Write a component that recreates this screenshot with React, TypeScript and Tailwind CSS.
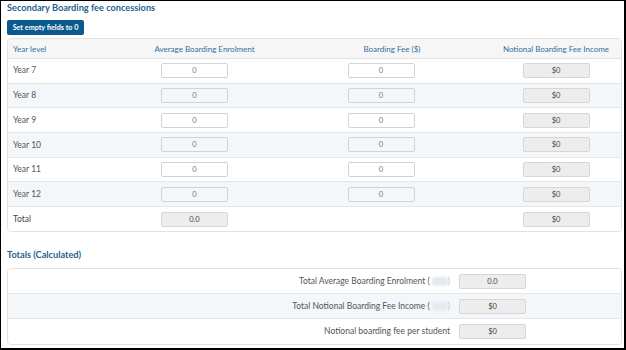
import React from "react";

const years = ["Year 7", "Year 8", "Year 9", "Year 10", "Year 11", "Year 12"];

function Box({ value, ro, shaded }: { value: string; ro?: boolean; shaded?: boolean }) {
  return (
    <div
      className={
        "w-[67px] h-[15px] rounded-[2px] border flex items-center justify-center text-[7.5px] " +
        (ro
          ? "bg-[#ededed] border-[#d6d6d6] text-[#444]"
          : shaded
          ? "bg-transparent border-[#d3d3d3] text-[#777]"
          : "bg-white border-[#d3d3d3] text-[#777]")
      }
    >
      {value}
    </div>
  );
}

const grid = "grid grid-cols-[120px_133px_240px_110px_1fr] items-center";

export default function App() {
  return (
    <div
      className="w-[626px] h-[350px] bg-white border-t border-l border-r-2 border-b-2 border-black overflow-hidden px-[6px]"
      style={{ fontFamily: "Lato, 'Open Sans', sans-serif" }}
    >
      <div className="h-[19px] text-[9.2px] font-bold text-[#1f5f8f] leading-[13px] whitespace-nowrap">
        Secondary Boarding fee concessions
      </div>
      <div className="h-[18px] flex items-start">
        <div className="flex items-center justify-center w-[77px] h-[15px] rounded-[2px] bg-[#0b5a8d] text-white text-[7.2px] leading-none font-bold whitespace-nowrap">
          Set empty fields to 0
        </div>
      </div>
      <div className="w-[615px] border border-[#e2e2e2] rounded-[4px] overflow-hidden">
        <div className={grid + " h-[20px] bg-[#f6f6f6] border-b border-[#e2e2e2] text-[8px] text-[#2f6fa3] whitespace-nowrap"}>
          <div className="pl-[5px]">Year level</div>
          <div className="text-center pl-[20px]">Average Boarding Enrolment</div>
          <div className="text-center pl-[22px]">Boarding Fee ($)</div>
          <div className="text-center">Notional Boarding Fee Income</div>
          <div />
        </div>
        {years.map((y, i) => {
          const shaded = i % 2 === 1;
          return (
            <div
              key={y}
              className={
                grid +
                " h-[24.7px] border-b border-[#e6e6e6] text-[8.5px] text-[#555] " +
                (shaded ? "bg-[#f3f7fa]" : "bg-white")
              }
            >
              <div className="pl-[5px]">{y}</div>
              <div className="flex justify-center">
                <Box value="0" shaded={shaded} />
              </div>
              <div className="flex justify-center">
                <Box value="0" shaded={shaded} />
              </div>
              <div className="flex justify-center">
                <Box value="$0" ro />
              </div>
              <div />
            </div>
          );
        })}
        <div className={grid + " h-[24px] bg-white text-[8.5px] text-[#444]"}>
          <div className="pl-[5px]">Total</div>
          <div className="flex justify-center">
            <Box value="0.0" ro />
          </div>
          <div />
          <div className="flex justify-center">
            <Box value="$0" ro />
          </div>
          <div />
        </div>
      </div>
      <div className="mt-[17px] h-[19px] text-[9.2px] font-bold text-[#1f5f8f] leading-[12px]">
        Totals (Calculated)
      </div>
      <div className="w-[615px] border border-[#e2e2e2] rounded-[4px] overflow-hidden">
        {[
          { label: "Total Average Boarding Enrolment (", blur: true, v: "0.0" },
          { label: "Total Notional Boarding Fee Income (", blur: true, v: "$0" },
          { label: "Notional boarding fee per student", blur: false, v: "$0" },
        ].map((r, i) => (
          <div
            key={r.label}
            className={
              "flex items-center h-[25px] text-[8.5px] text-[#555] " +
              (i === 1 ? "bg-[#f3f7fa] " : "bg-white ") +
              (i < 2 ? "border-b border-[#e6e6e6]" : "")
            }
          >
            <div className="w-[442px] flex justify-end items-center">
              <span>{r.label}</span>
              {r.blur && (
                <span className="ml-[2px] inline-block w-[16px] h-[9px] rounded-[3px] bg-[#e6eaee] blur-[1px]" />
              )}
              {r.blur && <span className="text-[#bbb]">)</span>}
            </div>
            <div className="ml-[9px]">
              <Box value={r.v} ro />
            </div>
          </div>
        ))}
      </div>
    </div>
  );
}
